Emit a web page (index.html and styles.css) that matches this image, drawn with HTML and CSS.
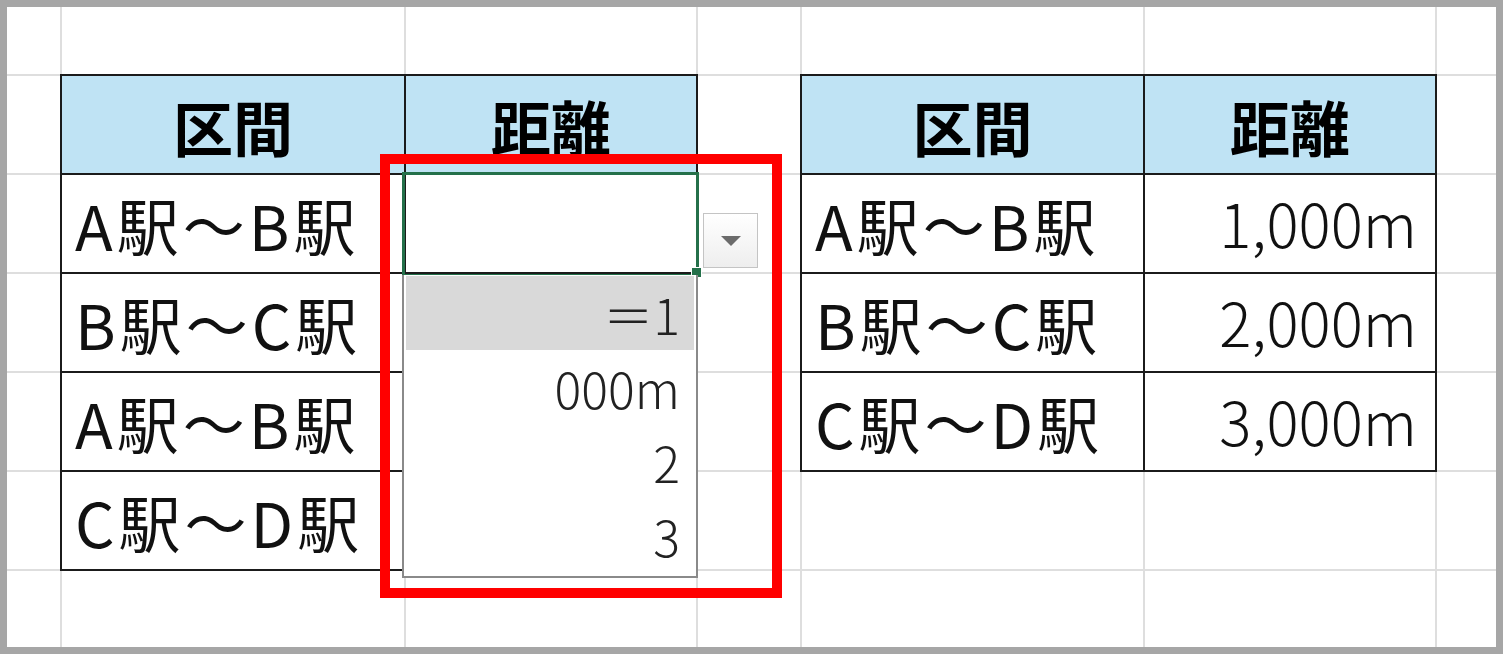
FILE: index.html
```html
<!DOCTYPE html>
<html lang="ja">
<head>
<meta charset="utf-8">
<title>区間と距離</title>
<link rel="stylesheet" href="styles.css">
</head>
<body>
<div class="sheet">
  <div class="grid">
    <div class="c"></div><div class="c"></div><div class="c"></div><div class="c"></div><div class="c"></div><div class="c"></div><div class="c"></div>

    <div class="c"></div>
    <div class="c t th">区間</div>
    <div class="c t th">距離</div>
    <div class="c"></div>
    <div class="c t th">区間</div>
    <div class="c t th">距離</div>
    <div class="c"></div>

    <div class="c"></div>
    <div class="c t tx">A駅～B駅</div>
    <div class="c t"></div>
    <div class="c"></div>
    <div class="c t tx">A駅～B駅</div>
    <div class="c t num">1,000m</div>
    <div class="c"></div>

    <div class="c"></div>
    <div class="c t tx">B駅～C駅</div>
    <div class="c t"></div>
    <div class="c"></div>
    <div class="c t tx">B駅～C駅</div>
    <div class="c t num">2,000m</div>
    <div class="c"></div>

    <div class="c"></div>
    <div class="c t tx">A駅～B駅</div>
    <div class="c t"></div>
    <div class="c"></div>
    <div class="c t tx">C駅～D駅</div>
    <div class="c t num">3,000m</div>
    <div class="c"></div>

    <div class="c"></div>
    <div class="c t tx">C駅～D駅</div>
    <div class="c t"></div>
    <div class="c"></div><div class="c"></div><div class="c"></div><div class="c"></div>

    <div class="c"></div><div class="c"></div><div class="c"></div><div class="c"></div><div class="c"></div><div class="c"></div><div class="c"></div>
  </div>

  <div class="sel"></div>
  <div class="handle"></div>
  <div class="ddbtn">
    <svg width="20" height="10" viewBox="0 0 20 10"><polygon points="0,0 20,0 10,10" fill="#6b6b6b"/></svg>
  </div>
  <ul class="ddlist">
    <li class="hl">＝1</li>
    <li>000m</li>
    <li>2</li>
    <li>3</li>
  </ul>
  <div class="redbox"></div>
</div>
</body>
</html>
```

FILE: styles.css
```css
html, body {
  margin: 0;
  padding: 0;
}

body {
  width: 1503px;
  height: 654px;
  overflow: hidden;
  background: #ffffff;
  font-family: "Noto Sans CJK JP", "Noto Sans", sans-serif;
  color: #000;
}

.sheet {
  position: relative;
  box-sizing: border-box;
  width: 1503px;
  height: 654px;
  border: 7px solid #a6a6a6;
  background: #ffffff;
}

.grid {
  display: grid;
  grid-template-columns: 53px 342px 290px 102px 341px 290px 59px;
  grid-template-rows: 67px repeat(5, 97px) 76px;
  gap: 2px;
  height: 100%;
  background: #dedede;
}

.c {
  background: #ffffff;
}

.t {
  box-shadow: 0 0 0 2px #1b1b1b;
  display: flex;
  align-items: center;
  font-size: 62px;
  line-height: 1;
  white-space: nowrap;
}

.th {
  background: #bfe3f4;
  justify-content: center;
  font-weight: 700;
  font-size: 60px;
  padding-top: 2px;
}

.tx {
  padding-left: 13px;
  letter-spacing: 4px;
  color: #111;
}

.num {
  justify-content: flex-end;
  padding-right: 18px;
  padding-bottom: 4px;
  font-size: 60px;
  font-weight: 300;
  color: #111;
}

.sel {
  position: absolute;
  left: 395px;
  top: 165px;
  width: 291px;
  height: 99px;
  border: 3px solid #24704a;
}

.handle {
  position: absolute;
  left: 684px;
  top: 260px;
  width: 9px;
  height: 9px;
  background: #24704a;
  border: 1px solid #ffffff;
}

.ddbtn {
  position: absolute;
  left: 696px;
  top: 206px;
  box-sizing: border-box;
  width: 55px;
  height: 55px;
  border: 1px solid #c4c4c4;
  background: linear-gradient(#ffffff, #eeeeee);
  display: flex;
  align-items: center;
  justify-content: center;
}

.ddbtn svg {
  display: block;
}

.ddlist {
  position: absolute;
  left: 395px;
  top: 268px;
  box-sizing: border-box;
  width: 296px;
  height: 303px;
  margin: 0;
  padding: 1px 2px;
  list-style: none;
  background: #ffffff;
  border: 2px solid #8a8a8a;
  border-top: none;
  font-size: 50px;
  font-weight: 300;
  line-height: 1;
}

.ddlist li {
  height: 74px;
  display: flex;
  align-items: center;
  justify-content: flex-end;
  padding-right: 14px;
  color: #222;
}

.ddlist li.hl {
  background: #d9d9d9;
}

.redbox {
  position: absolute;
  left: 373px;
  top: 147px;
  box-sizing: border-box;
  width: 402px;
  height: 444px;
  border: 10px solid #ff0000;
}
```
